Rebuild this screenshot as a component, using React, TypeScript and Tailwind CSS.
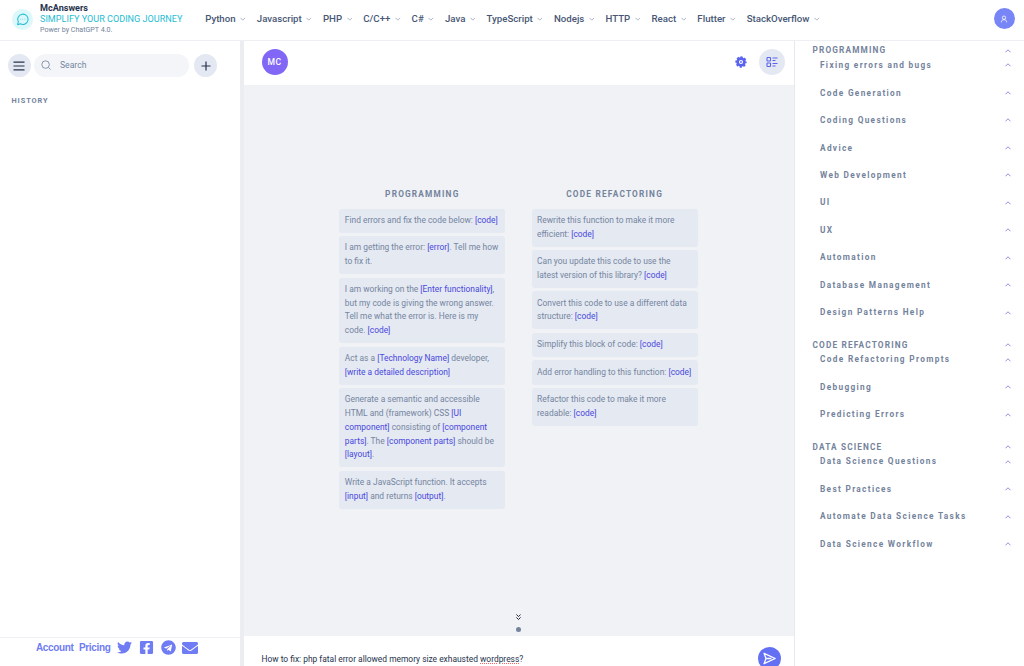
import type { ReactNode } from "react";
import { FaFacebookSquare, FaTelegram, FaTwitter, FaEnvelope } from "react-icons/fa";

const NAV = [
  "Python",
  "Javascript",
  "PHP",
  "C/C++",
  "C#",
  "Java",
  "TypeScript",
  "Nodejs",
  "HTTP",
  "React",
  "Flutter",
  "StackOverflow",
];

const PROMPTS = [
  {
    title: "PROGRAMMING",
    items: [
      "Find errors and fix the code below: [code]",
      "I am getting the error: [error]. Tell me how to fix it.",
      "I am working on the [Enter functionality], but my code is giving the wrong answer. Tell me what the error is. Here is my code. [code]",
      "Act as a [Technology Name] developer, [write a detailed description]",
      "Generate a semantic and accessible HTML and (framework) CSS [UI component] consisting of [component parts]. The [component parts] should be [layout].",
      "Write a JavaScript function. It accepts [input] and returns [output].",
    ],
  },
  {
    title: "CODE REFACTORING",
    items: [
      "Rewrite this function to make it more efficient: [code]",
      "Can you update this code to use the latest version of this library? [code]",
      "Convert this code to use a different data structure: [code]",
      "Simplify this block of code: [code]",
      "Add error handling to this function: [code]",
      "Refactor this code to make it more readable: [code]",
    ],
  },
];

const CATEGORIES = [
  {
    title: "PROGRAMMING",
    items: [
      "Fixing errors and bugs",
      "Code Generation",
      "Coding Questions",
      "Advice",
      "Web Development",
      "UI",
      "UX",
      "Automation",
      "Database Management",
      "Design Patterns Help",
    ],
  },
  { title: "CODE REFACTORING", items: ["Code Refactoring Prompts", "Debugging", "Predicting Errors"] },
  {
    title: "DATA SCIENCE",
    items: ["Data Science Questions", "Best Practices", "Automate Data Science Tasks", "Data Science Workflow"],
  },
];

function Chevron({ up, className }: { up?: boolean; className: string }) {
  return (
    <svg viewBox="0 0 12 8" fill="none" stroke="currentColor" strokeWidth="2" className={className}>
      <path d={up ? "M1 6.5 6 1.5l5 5" : "M1 1.5l5 5 5-5"} />
    </svg>
  );
}

// Splits on [placeholders] so they can be highlighted
function PromptCard({ text }: { text: string }) {
  return (
    <div className="rounded-[3px] bg-[#e5e9f2] py-[5.2px] pl-[5.5px] pr-[5px] text-[8.42px] leading-[13.8px] text-[#7485a0]">
      {text.split(/(\[[^\]]+\])/).map((part, i) =>
        part.startsWith("[") ? (
          <span key={i} className="text-[#4848dd]">
            {part}
          </span>
        ) : (
          part
        ),
      )}
    </div>
  );
}

function RoundButton({ className, children }: { className: string; children: ReactNode }) {
  return (
    <button type="button" className={`flex shrink-0 items-center justify-center rounded-full ${className}`}>
      {children}
    </button>
  );
}

function Header() {
  return (
    <header className="flex h-[41px] shrink-0 items-center border-b border-[#eeeff2] bg-white">
      <div className="mb-[2px] ml-[11.5px] flex h-[21px] w-[21px] shrink-0 items-center justify-center rounded-full bg-[#dcf8fb]">
        <svg viewBox="0 0 24 24" fill="none" stroke="#1fbdd2" strokeWidth="1.9" strokeLinejoin="round" className="h-[13px] w-[13px]">
          <path d="M3 21.5l1.3-5.6A9.5 9.5 0 1 1 8 19.8z" />
          <path d="M8 11.5h1M12 11.5h1M16 11.5h1" strokeWidth="1.6" />
        </svg>
      </div>
      <div className="ml-[7.5px] w-[165.2px] shrink-0 self-start whitespace-nowrap">
        <div className="mt-[1.5px] text-[9.1px] font-bold leading-[12.5px] text-[#26334d]">McAnswers</div>
        <div className="text-[9.1px] leading-[11px] text-[#1fbdd2]">SIMPLIFY YOUR CODING JOURNEY</div>
        <div className="text-[7.1px] leading-[10px] text-[#74839c]">Power by ChatGPT 4.0.</div>
      </div>
      <nav className="flex items-center gap-[11.1px] pb-[2px]">
        {NAV.map((name) => (
          <a key={name} className="flex items-center gap-[4.6px] text-[9.66px] font-medium leading-none text-[#475775]">
            {name}
            <Chevron className="h-[4px] w-[5.500px] text-[#a3aec0]" />
          </a>
        ))}
      </nav>
      <RoundButton className="mb-[3px] ml-auto mr-[9.5px] h-[21px] w-[21px] bg-[#7885f7] text-white">
        <svg viewBox="0 0 24 24" fill="none" stroke="currentColor" strokeWidth="2.4" className="h-2 w-2">
          <circle cx="12" cy="8" r="5" />
          <path d="M4 22c0-5 3-8 8-8s8 3 8 8" />
        </svg>
      </RoundButton>
    </header>
  );
}

function History() {
  return (
    <aside className="flex w-[240px] shrink-0 flex-col bg-white">
      <div className="flex items-center pl-[7.5px] pt-3">
        <RoundButton className="mt-px h-[23px] w-[23px] bg-[#e4e8f2] text-[#26334d]">
          <svg viewBox="0 0 12 10" stroke="currentColor" strokeWidth="1.2" className="h-[10px] w-3">
            <path d="M.5 1.2h11M.5 5h11M.5 8.8h11" />
          </svg>
        </RoundButton>
        <label className="ml-[3px] flex h-[23px] w-[155px] items-center rounded-full bg-[#f3f5f9] pl-[7px]">
          <svg viewBox="0 0 24 24" fill="none" stroke="#74839c" strokeWidth="2" className="h-[10px] w-[10px]">
            <circle cx="11" cy="11" r="9" />
            <path d="M18 18l5 5" />
          </svg>
          <span className="ml-[9.5px] text-[8.6px] text-[#7485a0]">Search</span>
        </label>
        <RoundButton className="ml-[5.5px] mt-px h-[23px] w-[23px] bg-[#e4e8f2] text-[#26334d]">
          <svg viewBox="0 0 10 10" stroke="currentColor" strokeWidth="1.2" className="h-[10px] w-[10px]">
            <path d="M5 .5v9M.5 5h9" />
          </svg>
        </RoundButton>
      </div>
      <h2 className="ml-[11.5px] mt-[17px] text-[7.4px] font-bold leading-[13px] tracking-[0.9px] text-[#74839c]">HISTORY</h2>
      <div className="mt-auto flex h-[29px] items-start border-t border-[#eff1f5] pl-9 pt-[2px] text-[#6f7cf3]">
        <span className="w-[43px] font-['Liberation_Sans'] text-[10px] font-bold leading-[15px] tracking-[-0.38px]">Account</span>
        <span className="w-[38px] font-['Liberation_Sans'] text-[10px] font-bold leading-[15px] tracking-[-0.35px]">Pricing</span>
        <FaTwitter className="h-[15px] w-[15px]" />
        <FaFacebookSquare className="ml-[7px] h-[15px] w-[15px]" />
        <FaTelegram className="ml-[6.500px] h-[15px] w-[15px]" />
        <FaEnvelope className="ml-[6.5px] h-4 w-4" />
      </div>
    </aside>
  );
}

function Chat() {
  return (
    <main className="flex min-w-0 flex-1 flex-col border-l-[4px] border-[#ebedf1]">
      <div className="flex h-[44px] shrink-0 items-center bg-white pb-[2px] pl-[17.5px] pr-[9px]">
        <div className="flex h-[26px] w-[26px] items-center justify-center rounded-full bg-[#8267f7] text-[8.6px] font-medium tracking-[0.4px] text-white">
          MC
        </div>
        <svg viewBox="0 0 24 24" className="ml-auto mr-[12.5px] h-3 w-3">
          <circle cx="12" cy="12" r="6.8" fill="none" stroke="#5a63ee" strokeWidth="5.4" />
          <circle cx="12" cy="12" r="9" fill="none" stroke="#5a63ee" strokeWidth="4.6" strokeDasharray="4.3 2.769" strokeDashoffset="2.15" />
          <circle cx="12" cy="12" r="1.8" fill="#5a63ee" />
        </svg>
        <RoundButton className="h-[26px] w-[26px] bg-[#e4e8f2] text-[#5a63ee]">
          <svg viewBox="0 0 24 24" fill="none" stroke="currentColor" strokeWidth="2.2" className="h-3 w-3">
            <rect x="2" y="3" width="7" height="7" rx="1" />
            <rect x="2" y="14" width="7" height="7" rx="1" />
            <path d="M13 4h10M13 9h6M13 15h10M13 20h6" />
          </svg>
        </RoundButton>
      </div>
      <div className="flex flex-1 flex-col bg-[#f0f2f6]">
        <div className="flex gap-[26.3px] pl-[95.3px] pt-[101.7px]">
          {PROMPTS.map((group) => (
            <section key={group.title} className="flex w-[166px] flex-col gap-[3.45px]">
              <h3 className="mb-[4.5px] text-center text-[8.28px] font-bold leading-[14px] tracking-[1.2px] text-[#74839c]">{group.title}</h3>
              {group.items.map((item) => (
                <PromptCard key={item} text={item} />
              ))}
            </section>
          ))}
        </div>
        <div className="mb-1 mt-auto flex flex-col items-center gap-[7px] pr-px">
          <svg viewBox="0 0 12 14" fill="none" stroke="#111827" strokeWidth="2.2" className="h-[6px] w-[5px]">
            <path d="M1 1l5 5 5-5M1 8l5 5 5-5" />
          </svg>
          <span className="h-[5px] w-[5px] rounded-full bg-[#74839c]" />
        </div>
      </div>
      <div className="flex h-[30px] shrink-0 items-start overflow-hidden bg-white pl-[17.5px] pr-[13px] pt-[11px]">
        <p className="pt-[4.5px] text-[8.41px] leading-[14px] text-[#26334d]">
          How to fix: php fatal error allowed memory size exhausted{" "}
          <span className="underline decoration-red-400 decoration-dotted decoration-1 underline-offset-1">wordpress</span>?
        </p>
        <RoundButton className="ml-auto h-[23px] w-[23px] bg-[#6370f3] text-white">
          <svg viewBox="0 0 24 24" fill="none" stroke="currentColor" strokeWidth="2.4" strokeLinejoin="round" className="h-[13px] w-[13px]">
            <path d="M2 2.500l20.500 9.500L2 21.500 5.500 12zM5.500 12h10" />
          </svg>
        </RoundButton>
      </div>
    </main>
  );
}

function Categories() {
  return (
    <aside className="flex w-[230px] shrink-0 flex-col gap-[17.8px] border-l border-[#e6e9ef] bg-white pl-[17.5px] pr-[13.5px] pt-[2.4px]">
      {CATEGORIES.map((category) => (
        <section key={category.title}>
          <div className="flex h-[14.6px] items-center justify-between">
            <h2 className="text-[8.28px] font-bold tracking-[1.15px] text-[#74839c]">{category.title}</h2>
            <Chevron up className="h-[4px] w-[6px] text-[#8b8fdf]" />
          </div>
          <ul className="flex flex-col gap-[12.9px] pl-[7.500px]">
            {category.items.map((item) => (
              <li key={item} className="flex h-[14.6px] items-center justify-between">
                <span className="text-[8.28px] font-bold tracking-[1.33px] text-[#74839c]">{item}</span>
                <Chevron up className="h-[4px] w-[6px] text-[#8b8fdf]" />
              </li>
            ))}
          </ul>
        </section>
      ))}
    </aside>
  );
}

export default function App() {
  return (
    <div className="flex h-[666px] w-[1024px] flex-col overflow-hidden bg-white font-['Roboto',sans-serif]">
      <Header />
      <div className="flex min-h-0 flex-1">
        <History />
        <Chat />
        <Categories />
      </div>
    </div>
  );
}
